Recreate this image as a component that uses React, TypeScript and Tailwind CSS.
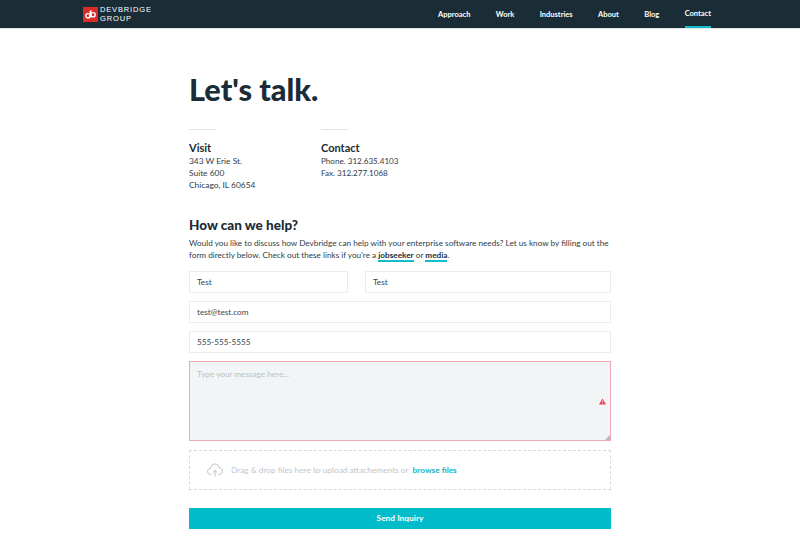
export default function App() {
  const field = "h-[22px] border border-[#e8ecee] rounded-[1px] bg-white flex items-center pl-[7px] text-[8.2px] text-[#3a474f]";
  return (
    <div className="bg-white font-['Lato','Noto_Sans',sans-serif] text-[#1b2c36] overflow-hidden h-[541px]">
      <header className="h-[28px] bg-[#1a2c36] flex items-stretch">
        <div className="flex items-center ml-[83px]">
          <svg width="15" height="15" viewBox="0 0 14 14" className="block">
            <rect width="14" height="14" fill="#d92c27" />
            <circle cx="4.6" cy="8.2" r="2" fill="none" stroke="#fff" strokeWidth="1.3" />
            <circle cx="9.4" cy="7.2" r="2" fill="none" stroke="#fff" strokeWidth="1.3" />
            <path d="M6.6 3.5V10M7.4 3V9" stroke="#fff" strokeWidth="1.1" />
          </svg>
          <div className="ml-[2px] text-white text-[7.5px] leading-[9px] tracking-[0.85px] font-['Liberation_Sans',sans-serif]">
            <div>DEVBRIDGE</div>
            <div>GROUP</div>
          </div>
        </div>
        <nav className="ml-auto mr-[89px] flex gap-[25.4px] text-[7.5px] font-bold text-white">
          {["Approach", "Work", "Industries", "About", "Blog"].map((t) => (
            <a key={t} className="flex items-center h-[28px] pt-[1px]">{t}</a>
          ))}
          <a className="flex items-center h-[28px] pt-[1px] border-b-[2px] border-[#14bccb]">Contact</a>
        </nav>
      </header>
      <div className="h-[1px] bg-[#e3e6e9]" />
      <main className="w-[422px] ml-[189px]">
        <h1 className="mt-[40px] text-[30.7px] leading-[42px] font-black text-[#1a2c36]">Let's talk.</h1>
        <div className="mt-[18px] flex">
          <div className="w-[132px]">
            <div className="w-[27px] h-[1px] bg-[#e3e6e9]" />
            <h3 className="mt-[10px] text-[11px] leading-[15px] font-bold">Visit</h3>
            <p className="text-[8.4px] leading-[12px] text-[#2f3d46]">343 W Erie St.<br />Suite 600<br />Chicago, IL 60654</p>
          </div>
          <div>
            <div className="w-[27px] h-[1px] bg-[#e3e6e9]" />
            <h3 className="mt-[10px] text-[11px] leading-[15px] font-bold">Contact</h3>
            <p className="text-[8.1px] leading-[12px] text-[#2f3d46]">Phone. 312.635.4103<br />Fax. 312.277.1068</p>
          </div>
        </div>
        <h2 className="mt-[25px] text-[13.5px] leading-[18px] font-black">How can we help?</h2>
        <p className="mt-[3px] text-[8.2px] leading-[12px] text-[#2f3d46]">
          Would you like to discuss how Devbridge can help with your enterprise software needs? Let us know by filling out the
          <br />
          form directly below. Check out these links if you're a{" "}
          <a className="inline-block leading-[10px] font-bold text-[#1a2c36] border-b-[2px] border-[#14bccb]">jobseeker</a> or{" "}
          <a className="inline-block leading-[10px] font-bold text-[#1a2c36] border-b-[2px] border-[#14bccb]">media</a>.
        </p>
        <div className="mt-[9px] flex gap-[17px]">
          <div className={`${field} w-[159px]`}>Test</div>
          <div className={`${field} flex-1`}>Test</div>
        </div>
        <div className={`${field} mt-[8px]`}>test@test.com</div>
        <div className={`${field} mt-[8px]`}>555-555-5555</div>
        <div className="relative mt-[8px] h-[80px] border border-[#f0a8b5] bg-[#f2f5f6] pl-[7px] pt-[6px] text-[8.2px] leading-[12px] text-[#b9c1c5]">
          Type your message here...
          <svg width="7" height="7" viewBox="0 0 8 7" className="absolute right-[4px] top-[36px]">
            <path d="M4 0L8 7H0Z" fill="#ee3f56" />
            <path d="M4 2.4V4.6M4 5.3V6" stroke="#fff" strokeWidth="0.8" />
          </svg>
          <svg width="5" height="5" viewBox="0 0 5 5" className="absolute right-0 bottom-0">
            <path d="M5 0L0 5H5Z" fill="#b3b8bb" />
          </svg>
        </div>
        <div className="mt-[9px] h-[40px] border border-dashed border-[#d5dadd] flex items-center pl-[17px] text-[8.3px] text-[#bfc6ca]">
          <svg width="16" height="14" viewBox="0 0 16 14" fill="none" stroke="#a9b3b9" strokeWidth="0.8" className="mr-[8px]">
            <path d="M4.5 11.5H3.6C1.9 11.5.6 10.2.6 8.6c0-1.5 1.1-2.7 2.6-2.9C3.6 3 5.6 1 8 1c2.3 0 4.2 1.7 4.6 4 1.6.2 2.8 1.5 2.8 3.2 0 1.8-1.4 3.3-3.2 3.3h-.8" />
            <path d="M8 13.5V7.5M5.8 9.5L8 7.3l2.2 2.2" />
          </svg>
          <span>Drag &amp; drop files here to upload attachements or</span>
          <a className="ml-[4px] font-bold text-[#14b4c6]">browse files</a>
        </div>
        <button className="mt-[18px] w-full h-[21px] bg-[#02bccc] text-white text-[8.4px] font-bold flex items-center justify-center">Send Inquiry</button>
      </main>
    </div>
  );
}
